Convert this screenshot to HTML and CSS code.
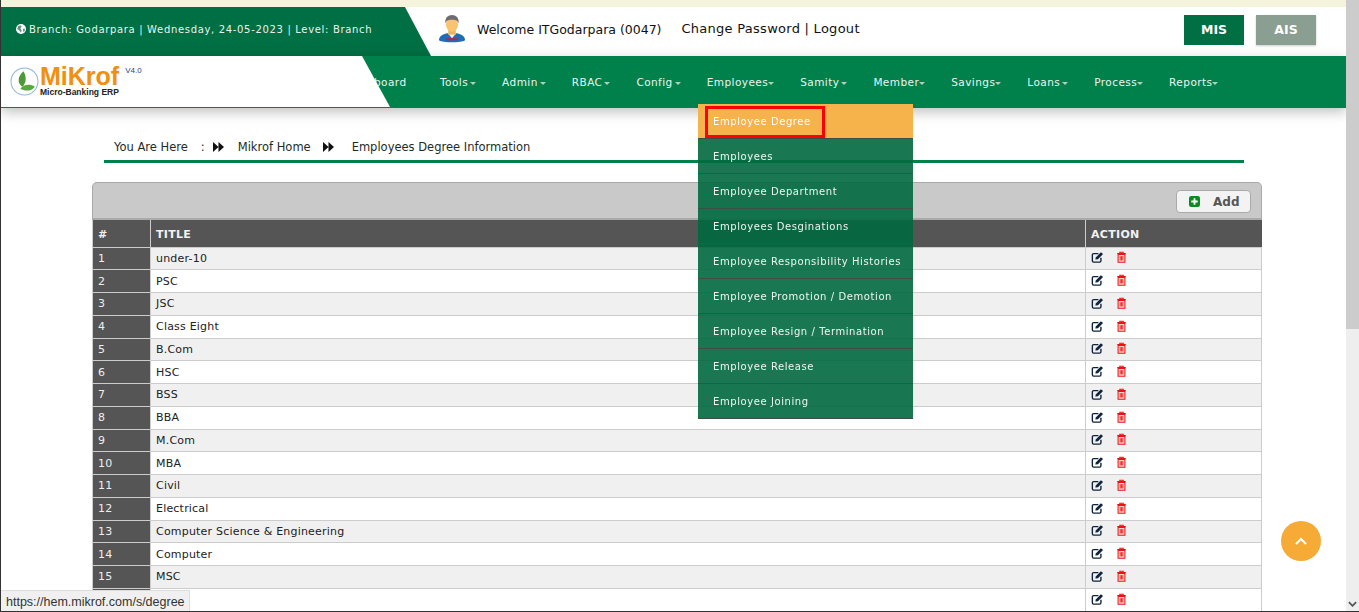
FILE: index.html
```html
<!DOCTYPE html>
<html lang="en">
<head>
  <meta charset="UTF-8" />
  <meta name="viewport" content="width=device-width, initial-scale=1.0" />
  <title>Employees Degree Information</title>
  <link rel="stylesheet" href="styles.css">
</head>
<body>

  <div class="page">
    <div class="notice"></div>

    <header class="topbar">
      <div class="branchInfo">
        <svg class="globe" viewBox="0 0 16 16"><circle cx="8" cy="8" r="8" fill="#fff"/><path d="M3 4l4-2 2 2-2 3 2 3-1 4-3-4-3-2zM11 8l3-1v4l-2 2z" fill="#5f8f7c"/></svg>
        <span>Branch: Godarpara | Wednesday, 24-05-2023 | Level: Branch</span>
      </div>
      <div class="userInfo">
        <svg class="avatar" viewBox="0 0 30 30">
          <path d="M1 27c0-5 6-8 14-8s14 3 14 8c-4 3-24 3-28 0z" fill="#1f6cb8"/>
          <path d="M10 19l5 6 5-6z" fill="#f0f0f0"/>
          <rect x="11" y="14" width="8" height="7" fill="#eeb35c"/>
          <ellipse cx="15" cy="10" rx="6.500" ry="8" fill="#f9c36f"/>
          <path d="M8 9C7 3 11 0 15 0s8 3 7 9c-1-3-2-4-7-4S9 6 8 9z" fill="#6d6d6d"/>
          <rect x="9" y="25" width="12" height="2" fill="#c8202c"/>
        </svg>
        <span class="welcome">Welcome ITGodarpara (0047)</span>
        <span class="account">Change Password | Logout</span>
      </div>
      <div class="systems">
        <a class="sysBtn mis">MIS</a>
        <a class="sysBtn ais">AIS</a>
      </div>
    </header>

    <nav class="navbar">
      <div class="logo">
        <svg class="logoMark" viewBox="0 0 28 28">
          <circle cx="14" cy="14" r="13" fill="#fff" stroke="#8fb9d0" stroke-width="1"/>
          <path d="M12 19C7 16 7 9 13 4c3 5 3 11-1 15z" fill="#4c9a35"/>
          <path d="M10 21c3-4 9-5 14-2-3 4-9 5-14 2z" fill="#5aa83c"/>
        </svg>
        <div class="logoText">
          <span class="logoName">MiKrof</span>
          <span class="logoSub">Micro-Banking ERP</span>
        </div>
        <span class="logoVer">V4.0</span>
      </div>
      <ul class="menu">
        <li class="cut">board</li>
        <li class="caret">Tools</li>
        <li class="caret">Admin</li>
        <li class="caret">RBAC</li>
        <li class="caret">Config</li>
        <li class="caret tight">Employees</li>
        <li class="caret">Samity</li>
        <li class="caret tight">Member</li>
        <li class="caret tight">Savings</li>
        <li class="caret">Loans</li>
        <li class="caret tight">Process</li>
        <li class="caret tight">Reports</li>
      </ul>
    </nav>

    <main class="content">
      <div class="crumbs">
        <span>You Are Here</span>
        <span class="sep">:</span>
        <svg class="arrows" viewBox="0 0 11 10"><path d="M0 0l5.500 5L0 10zM5.500 0L11 5l-5.500 5z" fill="#111"/></svg>
        <span>Mikrof Home</span>
        <svg class="arrows wide" viewBox="0 0 11 10"><path d="M0 0l5.500 5L0 10zM5.500 0L11 5l-5.500 5z" fill="#111"/></svg>
        <span>Employees Degree Information</span>
      </div>

      <section class="panel">
        <div class="panelHead">
          <button class="addBtn">
            <svg class="addIcon" viewBox="0 0 12 12"><rect width="12" height="12" rx="2.500" fill="#0a8a1f"/><path d="M5 2.500h2V5h2.500v2H7v2.500H5V7H2.500V5H5z" fill="#fff"/></svg>
            Add
          </button>
        </div>
        <table class="grid">
          <thead>
            <tr><th class="colNum">#</th><th>TITLE</th><th class="colAct">ACTION</th></tr>
          </thead>
          <tbody id="rows"></tbody>
        </table>
      </section>
    </main>
  </div>

  <ul class="dropdown">
    <li class="active">Employee Degree</li>
    <li>Employees</li>
    <li>Employee Department</li>
    <li>Employees Desginations</li>
    <li>Employee Responsibility Histories</li>
    <li>Employee Promotion / Demotion</li>
    <li>Employee Resign / Termination</li>
    <li>Employee Release</li>
    <li>Employee Joining</li>
  </ul>
  <div class="redBox"></div>

  <a class="toTop">
    <svg viewBox="0 0 12 8"><path d="M1 7l5-5 5 5" fill="none" stroke="#fff" stroke-width="2"/></svg>
  </a>

  <div class="statusUrl">https://hem.mikrof.com/s/degree</div>

  <div class="scrollTrack">
    <div class="scrollThumb"></div>
    <svg class="scrollDown" viewBox="0 0 10 6"><path d="M1 1l4 4 4-4" fill="none" stroke="#555" stroke-width="2"/></svg>
  </div>

  <script>
    const titles = ['under-10', 'PSC', 'JSC', 'Class Eight', 'B.Com', 'HSC', 'BSS', 'BBA', 'M.Com', 'MBA', 'Civil',
      'Electrical', 'Computer Science & Engineering', 'Computer', 'MSC', ''];
    const editIcon = '<svg class="ico" viewBox="0 0 14 14"><path d="M11 8v3.500a1.500 1.500 0 0 1-1.500 1.500h-7A1.500 1.500 0 0 1 1 11.500v-7A1.500 1.500 0 0 1 2.500 3H8" fill="none" stroke="#10233c" stroke-width="1.600"/><path d="M5 7.500L11 1.500l2.500 2-6 6-3 .5z" fill="#10233c"/></svg>';
    const trashIcon = '<svg class="ico trash" viewBox="0 0 12 14"><path d="M1 3h10M4 3V1.500h4V3" fill="none" stroke="#f01010" stroke-width="1.200"/><path d="M2 4h8v9H2z" fill="#ffd5d5" stroke="#f01010" stroke-width="1.200"/><path d="M4.500 6v5M6 6v5M7.500 6v5" stroke="#f01010"/></svg>';
    const rows = document.getElementById('rows');
    titles.forEach((title, i) => {
      const tr = document.createElement('tr');
      const num = document.createElement('td');
      const name = document.createElement('td');
      const act = document.createElement('td');
      num.className = 'colNum';
      num.textContent = i + 1;
      name.textContent = title;
      act.innerHTML = editIcon + trashIcon;
      tr.append(num, name, act);
      rows.appendChild(tr);
    });
  </script>
</body>
</html>
```

FILE: styles.css
```css
* {
  box-sizing: border-box;
}

html, body {
  height: 100%;
}

body {
  margin: 0;
  font-family: "DejaVu Sans", Verdana, sans-serif;
  background-color: #fff;
  color: #222;
  overflow: hidden;
  border-left: 1px solid #333;
  border-bottom: 1px solid #333;
}

.page {
  width: 1345px;
}

.notice {
  height: 7px;
  background-color: #f5f3dc;
}

/* Top bar */
.topbar {
  height: 49px;
  display: flex;
  align-items: center;
}

.branchInfo {
  width: 430px;
  height: 100%;
  padding: 0 0 5px 15px;
  display: flex;
  align-items: center;
  gap: 3px;
  background-color: #006f43;
  color: #eaf3ee;
  font-size: 10px;
  letter-spacing: 0.67px;
  clip-path: polygon(0 0, 404px 0, 430px 100%, 0 100%);
}

.globe {
  width: 10px;
  height: 10px;
}

.userInfo {
  display: flex;
  align-items: center;
  margin-left: 7px;
  margin-top: -5px;
  color: #111;
}

.avatar {
  width: 28px;
  height: 30px;
}

.welcome {
  margin-left: 11px;
  font-size: 12.500px;
}

.account {
  margin-left: 20px;
  margin-top: -2px;
  font-size: 13px;
  letter-spacing: 0.27px;
}

.systems {
  display: flex;
  gap: 12px;
  margin-left: auto;
  margin-right: 30px;
  margin-top: -4px;
}

.sysBtn {
  width: 60px;
  height: 30px;
  display: flex;
  align-items: center;
  justify-content: center;
  color: #fff;
  font-size: 12.500px;
  font-weight: bold;
}

.mis {
  background-color: #006f43;
}

.ais {
  background-color: #8a9e92;
  box-shadow: 0 1px 2px rgba(0, 0, 0, 0.2);
}

/* Menu */
.navbar {
  position: relative;
  height: 52px;
  display: flex;
  align-items: center;
  background-color: #00804b;
  box-shadow: 0 4px 12px rgba(0, 0, 0, 0.25);
}

.logo {
  position: absolute;
  left: 0;
  top: 0;
  z-index: 2;
  width: 389px;
  height: 51px;
  padding: 9px 0 0 9px;
  display: flex;
  align-items: flex-start;
  background-color: #fff;
  clip-path: polygon(0 0, 361px 0, 389px 100%, 0 100%);
}

.logoMark {
  width: 29px;
  height: 29px;
  margin-top: 2px;
}

.logoText {
  display: flex;
  flex-direction: column;
  margin-left: 1px;
}

.logoName {
  font-family: "Liberation Sans", Arial, sans-serif;
  font-size: 25px;
  font-weight: bold;
  line-height: 23px;
  color: #f0900f;
}

.logoSub {
  font-family: "Liberation Sans", Arial, sans-serif;
  font-size: 8.500px;
  font-weight: bold;
  line-height: 9px;
  color: #222;
}

.logoVer {
  margin-left: 6px;
  margin-top: 1px;
  font-family: "Liberation Sans", Arial, sans-serif;
  font-size: 8px;
  color: #3c3c8c;
}

.menu {
  list-style: none;
  margin: 0 0 0 373px;
  padding: 0;
  display: flex;
  color: #eaf5ef;
  font-size: 10.500px;
  letter-spacing: 0.44px;
}

.menu li {
  white-space: nowrap;
  margin-right: 26px;
}

.menu .cut {
  margin-right: 33.500px;
}

.caret::after {
  content: '';
  display: inline-block;
  margin-left: 2px;
  border-top: 3px solid #a9d2c0;
  border-left: 3px solid transparent;
  border-right: 3px solid transparent;
  vertical-align: middle;
}

.tight::after {
  margin-left: 0;
}

/* Breadcrumb */
.content {
  padding: 0 83px 0 91px;
}

.crumbs {
  width: 1140px;
  height: 55px;
  margin-left: 12px;
  padding: 26px 0 0 10px;
  display: flex;
  align-items: center;
  border-bottom: 3px solid #00804b;
  font-size: 11.500px;
  color: #1e2b26;
}

.sep {
  margin-left: 13px;
}

.arrows {
  width: 11px;
  height: 10px;
  margin: 0 14px 0 8px;
}

.wide {
  margin: 0 18px 0 12px;
}

/* Table */
.panel {
  margin-top: 19px;
  width: 1170px;
}

.panelHead {
  height: 38px;
  padding: 7px 10px 0 0;
  display: flex;
  justify-content: flex-end;
  align-items: flex-start;
  background-color: #c9c9c9;
  border: 1px solid #aaa;
  border-bottom: 2px solid #aaa;
  border-radius: 5px 5px 0 0;
}

.addBtn {
  width: 75px;
  height: 23px;
  display: flex;
  align-items: center;
  padding: 0 0 0 12px;
  gap: 13px;
  background-color: #f3f3f3;
  border: 1px solid #aaa;
  border-radius: 4px;
  color: #555;
  font-family: "DejaVu Sans", sans-serif;
  font-size: 12px;
  font-weight: bold;
}

.addIcon {
  width: 11px;
  height: 11px;
}

.grid {
  width: 100%;
  table-layout: fixed;
  border-collapse: collapse;
  font-size: 11px;
  letter-spacing: 0.2px;
}

.grid th {
  height: 27px;
  padding: 2px 5px 0;
  text-align: left;
  background-color: #555;
  color: #f2f2f2;
  font-size: 11px;
  letter-spacing: 0.3px;
  border-left: 1px solid #ccc;
  border-bottom: 1px solid #ccc;
}

.grid td {
  height: 22.750px;
  padding: 0 5px;
  color: #222;
  border: 1px solid #ccc;
}

.grid tbody tr:nth-child(odd) td {
  background-color: #f0f0f0;
}

.grid .colNum {
  width: 58px;
}

.grid tbody tr td.colNum {
  background-color: #555;
  color: #eee;
}

.grid .colAct {
  width: 176px;
}

.ico {
  width: 13px;
  height: 12px;
  margin-bottom: 2px;
  vertical-align: middle;
}

.trash {
  margin-left: 11px;
}

/* Employees menu, open */
.dropdown {
  position: fixed;
  left: 698px;
  top: 104px;
  width: 215px;
  list-style: none;
  margin: 0;
  padding: 0;
  background-color: rgba(0, 105, 62, 0.9);
  color: #eef5f1;
  font-size: 10px;
  letter-spacing: 0.58px;
}

.dropdown li {
  height: 35px;
  padding-left: 15px;
  display: flex;
  align-items: center;
  border-bottom: 1px solid #3c4f46;
}

.dropdown .active {
  background-color: #f6b24b;
  color: #fff;
}

.redBox {
  position: fixed;
  left: 705px;
  top: 106px;
  width: 120px;
  height: 32px;
  border: 3px solid #f00;
}

.toTop {
  position: fixed;
  left: 1281px;
  top: 521px;
  width: 40px;
  height: 40px;
  display: flex;
  align-items: center;
  justify-content: center;
  border-radius: 50%;
  background-color: #f6ab36;
}

.toTop svg {
  width: 12px;
  height: 8px;
}

.statusUrl {
  position: fixed;
  left: 1px;
  top: 590px;
  width: 189px;
  height: 21px;
  padding: 4px 0 0 5px;
  background-color: #f0f0f0;
  border-top: 1px solid #ddd;
  border-right: 1px solid #ddd;
  color: #333;
  font-family: "Liberation Sans", Arial, sans-serif;
  font-size: 12.500px;
  white-space: nowrap;
}

.scrollTrack {
  position: fixed;
  right: 0;
  top: 0;
  width: 13px;
  height: 611px;
  background-color: #eee;
}

.scrollThumb {
  height: 329px;
  background-color: #ccc;
}

.scrollDown {
  position: absolute;
  left: 2px;
  bottom: 4px;
  width: 9px;
  height: 6px;
}
```
